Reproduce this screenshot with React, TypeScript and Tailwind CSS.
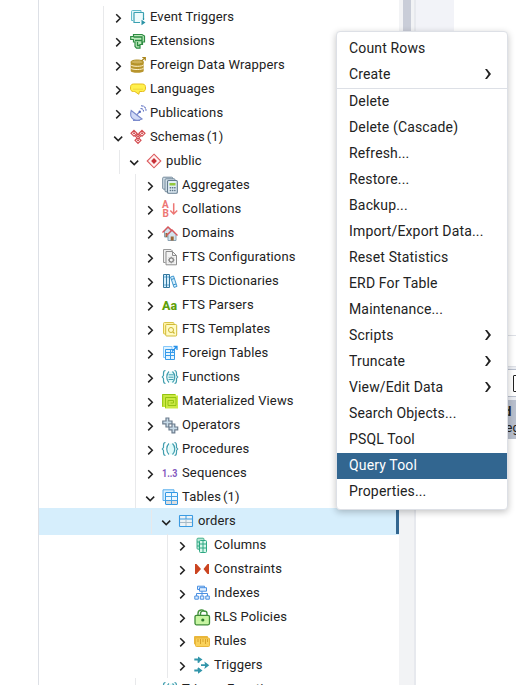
import React from "react";

type IconProps = { name: string };

function Icon({ name }: IconProps) {
  const p = { width: 16, height: 16, viewBox: "0 0 16 16", fill: "none", className: "shrink-0 overflow-visible" };
  switch (name) {
    case "event":
      return (<svg {...p}><path d="M3 11.500H1.500V2.500a1 1 0 0 1 1-1H11V3" stroke="#61bccb" fill="#dff6f9" /><path d="M13.500 9.500V4a.5.5 0 0 0-.5-.5H4.500a.5.5 0 0 0-.5.5v9.500h6" fill="#eefbfc" stroke="#3aa0b1" strokeWidth="1.200" /><path d="M13.500 9v2" stroke="#2b93a5" strokeWidth="1.300" /><path d="M11.500 10.800l4 2.700-4 2.700z" fill="#2b93a5" /></svg>);
    case "extension":
      return (<svg {...p}><path d="M.7 3.500h2.800V1.500h8.500l2.500 1.500v6h-2v2.500H10V15.200H6.500L5 13.500V9H3.500V6.500H.7z" fill="#bdeabc" stroke="#2d8b42" strokeWidth="1.200" /><path d="M3.500 4h8.500v3.500M5 7.500h7V11M7.500 9v3.500h2.500" stroke="#2d8b42" strokeWidth="1.300" /></svg>);
    case "foreign":
      return (<svg {...p}><path d="M.7 5.200v8.500c0 2.700 13 2.700 13 0V5.200z" fill="#b8952d" /><ellipse cx="7.200" cy="5" rx="6.300" ry="2" fill="#cfb158" stroke="#b08e22" /><path d="M.7 7.800c1 2 12 2 13 0M.7 11c1 2 12 2 13 0" stroke="#fff4ce" /><path d="M11.500 4L15 .8M12.300.5h3v3" stroke="#a9851b" strokeWidth="1.200" /></svg>);
    case "language":
      return (<svg {...p}><path d="M3.500 3h9c2.700 0 3 2 3 4s-.5 3.500-3 3.500H9.500l-.7 2.800-4-2.800H3.500C1 10.500.5 9 .5 7s.3-4 3-4z" fill="#fff04d" stroke="#e6bd1c" /><path d="M3 8.200h10" stroke="#f1d53a" /></svg>);
    case "publication":
      return (<svg {...p}><path d="M1.200 5.500C-1.500 14.500 6 17 12 14z" fill="#d0d9f6" stroke="#7b8bcd" strokeWidth="1.100" /><path d="M6.500 10l3-3M3 15.500h7" stroke="#7b8bcd" strokeWidth="1.200" /><circle cx="9.800" cy="6.800" r="1.200" fill="#5265ba" /><path d="M10.500 3.500c2 0 3 1 3 3M11 .8c3.500 0 5 2 5 5" stroke="#5a6dc0" strokeWidth="1.100" strokeDasharray="2.500 .7" /></svg>);
    case "schemas":
      return (<svg {...p}><g stroke="#d34b4f" strokeWidth="1.150" fill="#fce7e7"><path d="M4 1.300l3 3-3 3-3-3zM12 1.300l3 3-3 3-3-3zM8 8.300l3 3-3 3.200-3-3.200z" /><path d="M8 4.800l2.500 2.500L8 9.800 5.500 7.300z" /></g><path d="M3.300 3.600h1.500v1.500H3.300zM11.300 3.600h1.500v1.500h-1.500zM7.300 10.600h1.500v1.500H7.300zM7.300 6.500h1.500V8H7.300z" fill="#c52e35" /></svg>);
    case "schema":
      return (<svg {...p}><path d="M8 1.200L14.800 8 8 14.800 1.200 8z" fill="#fff1f1" stroke="#dc5c5f" strokeWidth="1.100" /><path d="M8 5.100L10.900 8 8 10.900 5.100 8z" fill="#c72f36" /></svg>);
    case "aggregate":
      return (<svg {...p}><rect x=".7" y=".2" width="10" height="12" rx="1" fill="#d5e2eb" stroke="#73899a" /><rect x="3" y="1.800" width="10" height="13" rx="1" fill="#d5e2eb" stroke="#73899a" /><rect x="5.500" y="3.500" width="9.800" height="12.800" rx="1" fill="#e0edf6" stroke="#637b8d" strokeWidth="1.100" /><path d="M7.500 6h6v2.500h-6z" fill="#93c83d" /><path d="M7.700 10.700h6M7.700 13.500h6" stroke="#607788" strokeWidth="1.500" strokeDasharray="1.500 .7" /></svg>);
    case "collation":
      return (<svg {...p}><text x="0" y="7.200" fill="#ed7774" fontFamily="Roboto, sans-serif" fontWeight="700" fontSize="10">A</text><text x=".4" y="16.200" fill="#ed7774" fontFamily="Roboto, sans-serif" fontWeight="700" fontSize="10">B</text><path d="M11.700 2.300v10.500M8.300 9.500l3.400 3.500 3.500-3.500" stroke="#ed7774" strokeWidth="1.500" /></svg>);
    case "domain":
      return (<svg {...p}><path d="M2.500 6v6h7V6L6 2.500z" fill="#d4e3ed" stroke="#8aa3b3" /><path d="M3.500 8h2v4h-2z" fill="#9a6736" /><path d="M.5 7.500L6 2l5.500 5" stroke="#d9555a" strokeWidth="1.300" /><path d="M6 9.500v6h8v-6l-4-4z" fill="#d4e3ed" stroke="#8aa3b3" /><path d="M4.500 10.500L10 5l5.500 5.500" stroke="#d9555a" strokeWidth="1.300" /><path d="M8.700 11.500h3v4h-3z" fill="#9a6736" /></svg>);
    case "config":
      return (<svg {...p}><path d="M3.500 13.500h-2V.5H9l1.500 1.500" stroke="#999" fill="#eee" /><path d="M4 2.500h6.500L14.500 6.500v9.300H4z" fill="#f3f3f3" stroke="#8d8d8d" /><path d="M10.500 2.500v4h4" stroke="#8d8d8d" /><circle cx="9.300" cy="11" r="2.100" stroke="#858585" strokeWidth="1.200" /><path d="M9.300 7.700v1M9.300 13.300v1M6 11h1M11.600 11h1M7 8.700l.7.7M10.900 12.600l.7.7M11.600 8.700l-.7.7M7.700 12.600l-.7.7" stroke="#858585" /></svg>);
    case "dictionary":
      return (<svg {...p}><path d="M1.500 1.500h3v13h-3zM4.500 1.500h3v13h-3z" fill="#d6effd" stroke="#34789f" /><path d="M8.500 4l3-1 3.500 10.400-3 1z" fill="#d6effd" stroke="#4298d0" /><path d="M2.300 4h1.500M5.300 4h1.500M2.300 12h1.500M5.300 12h1.500M9.300 6.500l3-1M11 12l3-1" stroke="#368fc7" /></svg>);
    case "parser":
      return (<svg {...p}><text x="0" y="12.700" fill="#60a00b" fontFamily="Roboto, sans-serif" fontWeight="800" fontSize="12" textLength="15" lengthAdjust="spacingAndGlyphs">Aa</text></svg>);
    case "template":
      return (<svg {...p}><rect x="1.500" y="1.500" width="10.500" height="11.500" rx="1" fill="#fff1a5" stroke="#d9c449" /><rect x="3.700" y="3.500" width="11" height="11.500" rx="1" fill="#fffbc4" stroke="#d1bb38" /><circle cx="9" cy="9" r="2.500" stroke="#cbb32e" /><path d="M10.800 10.800l1.700 1.700" stroke="#cbb32e" strokeWidth="1.200" /></svg>);
    case "foreignTable":
      return (<svg {...p}><path d="M3.500 12.500H1.500V1.500H10v3" stroke="#86c8fa" fill="#e0f3ff" /><path d="M3.500 4.500h9v10h-9z" fill="#e4f5ff" stroke="#369aea" /><path d="M3.500 7.500h9M3.500 10.500h9M8.500 4.500v10" stroke="#369aea" /><path d="M10 6.500l4.700-4.700M11.500 1.500h3.500V5" stroke="#2691e9" strokeWidth="1.300" /></svg>);
    case "function":
    case "procedure":
      return (<svg {...p}><path d="M8.500 2.500c-3 3-3 8 0 11h3c3-3 3-8 0-11z" fill="#dffafa" /><path d="M3.500 1.500c-1.700 0-2 1-2 3v2L.3 8l1.200 1.500v2c0 2 .3 3 2 3M12.500 1.500c1.700 0 2 1 2 3v2L15.700 8l-1.200 1.500v2c0 2-.3 3-2 3M7 2.500c-3 3-3 8 0 11M10.500 2.500c3 3 3 8 0 11" stroke="#429faf" strokeWidth="1.200" />{name === "function" && <path d="M6.500 5.800h5M6.500 8.200h5M6.500 10.500h5" stroke="#429faf" />}</svg>);
    case "materialized":
      return (<svg {...p}><path d="M0 1h14v1.500h2V15.500H3V14H0z" fill="#cbe943" /><path d="M.7 13.500v-12H13M3.500 14.800V4.500H14V12.500H6V7.500h5.500v2.500h-3" stroke="#93c312" /></svg>);
    case "operator":
      return (<svg {...p}><path d="M4 1h2.800v3H10v2.800H6.800V10H4V6.800H.8V4H4z" fill="#c8dbe8" stroke="#6d7d8e" strokeWidth="1.200" /><path d="M10 7h2.800v3h2.900v2.800h-2.900v3H10v-3H7V10h3z" fill="#c8dbe8" stroke="#6d7d8e" strokeWidth="1.200" /></svg>);
    case "sequence":
      return (<svg {...p}><text x="0" y="11.800" fill="#8258bd" fontFamily="Roboto, sans-serif" fontSize="10.500" fontWeight="700" textLength="15.500" lengthAdjust="spacingAndGlyphs">1..3</text></svg>);
    case "tables":
      return (<svg {...p}><path d="M3 11.500H1V.8h11V3" fill="#d9efff" stroke="#57aeed" /><rect x="3.500" y="3.500" width="12" height="12" rx=".5" fill="#eef8ff" stroke="#3298e4" /><path d="M4 11h11v4H4z" fill="#dcdedf" /><path d="M3.500 7.500h12M3.500 11.500h12M9.500 3.500v12" stroke="#4aa4e5" /></svg>);
    case "table":
      return (<svg {...p}><rect x="1.500" y="2.500" width="13" height="11" rx=".5" fill="#edf3f6" stroke="#3b9be2" strokeWidth="1.100" /><path d="M2 6h12M8 3v3" stroke="#3b9be2" /><path d="M2 9.500h12M8 6v7" stroke="#a7bac7" /></svg>);
    case "column":
      return (<svg {...p}><rect x="3" y="1.200" width="7" height="11" rx="1" fill="#b6e9d6" stroke="#42ae8d" /><rect x="5.500" y="3.500" width="7" height="12" rx="1" fill="#d7f7ea" stroke="#2fa883" /><path d="M5.500 7h7M5.500 11h7M9 3.500v12M3 5h2.500M3 9h2.500" stroke="#2fa883" /></svg>);
    case "constraint":
      return (<svg {...p}><path d="M1 3h1.500L7 8l-4.500 5H1zM15 3h-1.500L9.500 8l4 5H15z" fill="#cb4420" /></svg>);
    case "index":
      return (<svg {...p}><g stroke="#4a90e2" fill="#e0efff"><path d="M3.500 1.200h7v3.300h-7z" /><path d="M5.500 2.700h7v3.500h-7z" /><path d="M8 6.200v4.500M2.500 11V8.500h11V11" fill="none" /><path d="M.8 11h3.500v3.200H.8zM6.300 11h3.500v3.200H6.300zM11.800 11h3.500v3.200h-3.500z" /></g></svg>);
    case "policy":
      return (<svg {...p}><path d="M4 6.500V4.500C4 0 10 0 10.500 3M6.500 6.500V4.500c0-3.500 6.500-3.500 6.500 0v2" stroke="#45943e" strokeWidth="1.400" /><rect x="1" y="6.300" width="14.500" height="9.500" rx="1.500" fill="#c8f5a2" stroke="#3e8c36" strokeWidth="1.300" /><circle cx="8.800" cy="11" r="1.600" fill="#2f7d2e" /></svg>);
    case "rule":
      return (<svg {...p}><rect x="0" y="3" width="14" height="8.500" rx="1" fill="#e9b63a" /><rect x="1.500" y="5" width="14" height="8.500" rx="1" fill="#f9d15a" stroke="#e9b63a" /><path d="M4 6v3M6.500 6v5M9 6v3M11.500 6v5M13.500 6v3" stroke="#d9a32a" /></svg>);
    case "trigger":
      return (<svg {...p}><path d="M.3 2.500H6M.3 13.500H6M4.500 3v2.700M4.500 11v2M7 8.200h5.500" stroke="#3195aa" strokeWidth="1.800" /><path d="M4-.5L8.500 2.500 4 5.800zM4 10.300l4.500 3.200L4 16.800zM10.300 4.500l5 3.700-5 3.700 1-3.700z" fill="#3195aa" /></svg>);
    default:
      return null;
  }
}

type Node = { label: string; icon: string; level: number; count?: number; open?: boolean; selected?: boolean };

const nodes: Node[] = [
  { label: "Event Triggers", icon: "event", level: 0 },
  { label: "Extensions", icon: "extension", level: 0 },
  { label: "Foreign Data Wrappers", icon: "foreign", level: 0 },
  { label: "Languages", icon: "language", level: 0 },
  { label: "Publications", icon: "publication", level: 0 },
  { label: "Schemas", count: 1, icon: "schemas", level: 0, open: true },
  { label: "public", icon: "schema", level: 1, open: true },
  { label: "Aggregates", icon: "aggregate", level: 2 },
  { label: "Collations", icon: "collation", level: 2 },
  { label: "Domains", icon: "domain", level: 2 },
  { label: "FTS Configurations", icon: "config", level: 2 },
  { label: "FTS Dictionaries", icon: "dictionary", level: 2 },
  { label: "FTS Parsers", icon: "parser", level: 2 },
  { label: "FTS Templates", icon: "template", level: 2 },
  { label: "Foreign Tables", icon: "foreignTable", level: 2 },
  { label: "Functions", icon: "function", level: 2 },
  { label: "Materialized Views", icon: "materialized", level: 2 },
  { label: "Operators", icon: "operator", level: 2 },
  { label: "Procedures", icon: "procedure", level: 2 },
  { label: "Sequences", icon: "sequence", level: 2 },
  { label: "Tables", count: 1, icon: "tables", level: 2, open: true },
  { label: "orders", icon: "table", level: 3, open: true, selected: true },
  { label: "Columns", icon: "column", level: 4 },
  { label: "Constraints", icon: "constraint", level: 4 },
  { label: "Indexes", icon: "index", level: 4 },
  { label: "RLS Policies", icon: "policy", level: 4 },
  { label: "Rules", icon: "rule", level: 4 },
  { label: "Triggers", icon: "trigger", level: 4 },
  { label: "Trigger Functions", icon: "function", level: 2 },
];

const indents = ["pl-16", "pl-20", "pl-24", "pl-28", "pl-32"];

function TreeRow({ node }: { node: Node }) {
  return (
    <div className={`h-6 shrink-0 ${indents[node.level]} ${node.selected ? "border-r-[3px] border-[#326690] bg-[#d6eefc] shadow-[0_-2px_0_#d6eefc,0_1px_0_#d6eefc]" : ""}`}>
      <div className="flex h-6 items-start border-l border-[#e8e9eb]">
        <svg width="10" height="10" viewBox="0 0 10 10" fill="none" className="ml-[9px] mt-[7px] shrink-0">
          <path d={node.open ? "M1.200 3.600l4 4 4-4" : "M3.200 1.200l4.100 4.100-4.100 4.100"} stroke="#222" strokeWidth="1.500" />
        </svg>
        <div className="ml-[7px] mt-[3px] flex">
          <Icon name={node.icon} />
        </div>
        <span className="ml-1 whitespace-nowrap text-[13px] leading-[22px] tracking-[0.0107em]">
          {node.label}
          {node.count && <span className="ml-[2px]">({node.count})</span>}
        </span>
      </div>
    </div>
  );
}

type Item = { label: string; sub?: boolean; active?: boolean; divider?: boolean };

const items: Item[] = [
  { label: "Count Rows" },
  { label: "Create", sub: true, divider: true },
  { label: "Delete" },
  { label: "Delete (Cascade)" },
  { label: "Refresh..." },
  { label: "Restore..." },
  { label: "Backup..." },
  { label: "Import/Export Data..." },
  { label: "Reset Statistics" },
  { label: "ERD For Table" },
  { label: "Maintenance..." },
  { label: "Scripts", sub: true },
  { label: "Truncate", sub: true },
  { label: "View/Edit Data", sub: true },
  { label: "Search Objects..." },
  { label: "PSQL Tool" },
  { label: "Query Tool", active: true },
  { label: "Properties..." },
];

function ContextMenu() {
  return (
    <div className="absolute left-[336px] top-[31px] w-[172px] rounded border border-[#dde0e6] bg-white py-1 text-sm tracking-[0.0107em] shadow-[0_2px_7px_rgba(0,0,0,0.24)]">
      {items.map((item) => (
        <React.Fragment key={item.label}>
          <div className={`flex h-[26px] items-center justify-between pb-0.5 pl-3 pr-[15px] ${item.active ? "bg-[#326690] text-white" : ""}`}>
            <span className="whitespace-nowrap">{item.label}</span>
            {item.sub && (
              <svg width="8" height="12" viewBox="0 0 8 12" fill="none">
                <path d="M1 1h2l4 5-4 5H1l3.500-5z" fill="#222" />
              </svg>
            )}
          </div>
          {item.divider && <div className="h-px bg-[#dde0e6]" />}
        </React.Fragment>
      ))}
    </div>
  );
}

export default function App() {
  return (
    <div className="relative flex h-[685px] w-[516px] overflow-hidden bg-white font-[Roboto,sans-serif] text-[#222]">
      <div className="flex w-[399px] shrink-0">
        <div className="w-[39px] shrink-0 border-r border-[#dde0e6]" />
        <div className="flex min-w-0 grow flex-col overflow-hidden pt-1.5">
          {nodes.map((node) => <TreeRow key={node.label} node={node} />)}
        </div>
      </div>
      <div className="flex w-[15px] shrink-0 bg-[#f2f3f5] pl-1">
        <div className="h-[400px] w-2 bg-[#c9cdd8]" />
      </div>
      <div className="w-0.5 shrink-0 bg-[#e7e9ee]" />
      <div className="flex min-w-0 grow flex-col">
        <div className="h-[336px] shrink-0 border-b border-[#dde0e6]">
          <div className="h-[34px] w-[38px] bg-[#f2f3f8]" />
        </div>
        <div className="h-[30px] shrink-0" />
        <div className="h-[3px] shrink-0 border-t border-[#dde0e6] bg-[#eceef3]" />
        <div className="flex h-[28px] shrink-0 items-center border-y border-[#b8bfcd] pl-[97px]">
          <div className="h-[17px] w-4 shrink-0 rounded-[1px] border-[1.5px] border-[#222]" />
        </div>
        <div className="h-[3px] shrink-0 bg-[#eceef3]" />
        <div className="h-[39px] shrink-0 overflow-hidden bg-[#b8bfcd] pl-[75px] pt-1 text-[13px] leading-4">
          <div className="pl-[9.5px] font-bold">id</div>
          <div className="whitespace-nowrap">integer</div>
        </div>
      </div>
      <ContextMenu />
    </div>
  );
}
